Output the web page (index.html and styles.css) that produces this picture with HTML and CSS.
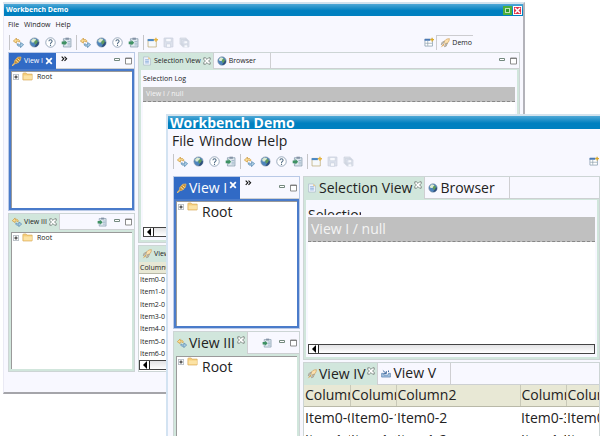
FILE: index.html
```html
<!DOCTYPE html>
<html lang="en">
<head>
<meta charset="utf-8">
<title>Workbench Demo</title>
<link rel="stylesheet" href="styles.css">
</head>
<body>
<svg class="sprite" aria-hidden="true">
  <symbol id="i-nav" viewBox="0 0 16 16">
    <path d="M.5 6 5 1.500v2.500c3-1 5 0 5 3H8C8 6 7 6 5 6.500V9z" fill="#fbdc94" stroke="#c99537"/>
    <path d="M15.500 11 11 15.500V13c-3 1-5 0-5-3h2c0 1 1 1.500 3 1V8z" fill="#a9cbe4" stroke="#5285ac"/>
  </symbol>
  <symbol id="i-globe" viewBox="0 0 16 16">
    <circle cx="8" cy="8" r="6.700" fill="#4d84bd" stroke="#8393a3"/>
    <path d="M8 14.500A6.500 6.500 0 0 0 14.500 8L12 6l-2 5z" fill="#2f4f7c"/>
    <path d="M3 5l3-3 4 1 0 2-3 3-3 0z" fill="#dcebd0"/>
    <path d="M8 6l3-2 2 3-3 4-2-1z" fill="#5f9a5c"/>
  </symbol>
  <symbol id="i-help" viewBox="0 0 16 16">
    <circle cx="8" cy="8" r="6.900" fill="#fff" stroke="#7389a0"/>
    <path d="M5.700 6.200c0-3 4.600-3 4.600 0 0 1.800-2.300 1.800-2.300 4" fill="none" stroke="#4a6681" stroke-width="1.500"/>
    <path d="M7.200 11.200h1.600v1.800H7.200z" fill="#4a6681"/>
  </symbol>
  <symbol id="i-import" viewBox="0 0 16 16">
    <path d="M3.500 2.500h11v12h-11z" fill="#dfe8ee" stroke="#7c92a5"/>
    <path d="M6.500 1h5v3h-5z" fill="#8593a6"/>
    <path d="M9.500 6.500h4M9.500 9h4M9.500 11.500h4" stroke="#8ba6bf"/>
    <path d="M1 6.500h4V4.500l4 4-4 4v-2H1z" fill="#3f9163"/>
  </symbol>
  <symbol id="i-new" viewBox="0 0 16 16">
    <path d="M1.500 3.500h12v11h-12z" fill="#f6f9fc" stroke="#b9a56c"/>
    <path d="M1 3h9v3H1z" fill="#4a88c6"/>
    <path d="M13 1v6M10 4h6" stroke="#e6b543" stroke-width="2"/>
  </symbol>
  <symbol id="i-save" viewBox="0 0 16 16">
    <path d="M1.500 1.500h13v13h-13z" fill="#dde2ed" stroke="#c9cfdc"/>
    <path d="M4 2h8v5H4zM5 10h6v5H5z" fill="#f8f9fd" stroke="#c9d0dd"/>
  </symbol>
  <symbol id="i-saveall" viewBox="0 0 16 16">
    <path d="M1.500 1.500h9v9h-9zM3.500 3.500h9v9h-9zM5.500 5.500h9v9h-9z" fill="#e1e6ef" stroke="#cad0dc"/>
    <path d="M8 6h4v3H8zM8 12h4v3H8z" fill="#f8f9fd"/>
  </symbol>
  <symbol id="i-persp" viewBox="0 0 16 16">
    <path d="M1.500 3.500h12v11h-12z" fill="#fff" stroke="#71889b"/>
    <path d="M1 3h9v3H1z" fill="#4a79b4"/>
    <path d="M2 10h11M6 6v8" stroke="#8296a4"/>
    <path d="M13 1v6M10 4h6" stroke="#dba92a" stroke-width="2"/>
  </symbol>
  <symbol id="i-rocket" viewBox="0 0 16 16">
    <path d="M15 1c-5 0-8 3-9 6l3 3c3-1 6-4 6-9z" fill="#fbe0ae" stroke="#d09a50"/>
    <path d="M7 5 3 7l-1 4 4-3zM9 9l3-1-2 5-3 1z" fill="#c9c5bd" stroke="#9c9384"/>
    <path d="M1 15l5-6 1 2z" fill="#dd9836"/>
  </symbol>
  <symbol id="i-plug" viewBox="0 0 16 16">
    <path d="M14.500 1.500 9 2 4.500 7l-1 5.500 5-1 5-5z" fill="#c98f33" stroke="#edc06a"/>
    <path d="M0 16l4-4" stroke="#edc06a" stroke-width="2"/>
    <path d="M6 6.500l4 4M9 4l3.500 3.500" stroke="#fff0b8" stroke-width="1.500"/>
  </symbol>
  <symbol id="i-doc" viewBox="0 0 16 16">
    <path d="M2.500 1.500h8l3 3v10h-11z" fill="#eef3fb" stroke="#a9b7c9"/>
    <path d="M10 1v4h4" fill="#e8c887"/>
    <path d="M5 6h6M5 8.500h6M5 11h6" stroke="#8fb0dc" stroke-width="1.500"/>
  </symbol>
  <symbol id="i-tray" viewBox="0 0 16 16">
    <path d="M1 8.500h3l1 3h6l1-3h3v6H1z" fill="#a4c2e1" stroke="#4975a5"/>
    <path d="M3 4l5 4.500M8.500 5v4h-4M12 4v2.500" fill="none" stroke="#315f96" stroke-width="1.500"/>
  </symbol>
  <symbol id="i-folder" viewBox="0 0 20 16">
    <path d="M1.500 14V3l1-1.500h5L9 3.500h9.500V14l-1 .5h-15z" fill="#f4cd7b" stroke="#d3a451"/>
    <path d="M3 6h15v7H3z" fill="#fce3a5"/>
  </symbol>
  <symbol id="i-plus" viewBox="0 0 9 9">
    <path d="M.5.5h8v8h-8z" fill="#fff" stroke="#8c97a1"/>
    <path d="M2 4.500h5M4.500 2v5" stroke="#111" stroke-width="1.300"/>
  </symbol>
  <symbol id="i-close" viewBox="0 0 10 10">
    <path d="M1 1h2l2 2 2-2h2v2L7 5l2 2v2H7L5 7 3 9H1V7l2-2-2-2z" fill="#fff" stroke="#68736d"/>
  </symbol>
  <symbol id="i-x" viewBox="0 0 10 10">
    <path d="M1.500 1.500l7 7M8.500 1.500l-7 7" stroke="#fff" stroke-width="2.200"/>
  </symbol>
  <symbol id="i-more" viewBox="0 0 10 10">
    <path d="M1 1l3 3-3 3M5 1l3 3-3 3" fill="none" stroke="#111" stroke-width="1.600"/>
  </symbol>
  <symbol id="i-min" viewBox="0 0 8 8">
    <path d="M1.500 1.500h5v2h-5z" fill="#fff" stroke="#74897f"/>
  </symbol>
  <symbol id="i-max" viewBox="0 0 8 8">
    <path d="M.5 1h6v6h-6z" fill="#fff" stroke="#8c8c8c"/>
    <path d="M0 1.500h7" stroke="#808080"/>
  </symbol>
  <symbol id="i-left" viewBox="0 0 8 8">
    <path d="M6 0v8L2 4z" fill="#000"/>
  </symbol>
</svg>

<main class="desktop">
  <section class="window back">
    <header class="titlebar">
      <h1>Workbench Demo</h1>
      <button class="caption zoom" aria-label="Maximize"></button>
      <button class="caption quit" aria-label="Close"><svg><use href="#i-x"/></svg></button>
    </header>
    <nav class="menu"><button>File</button><button>Window</button><button>Help</button></nav>
    <div class="toolbar">
      <div class="group">
        <button aria-label="Navigate"><svg><use href="#i-nav"/></svg></button><button aria-label="Web"><svg><use href="#i-globe"/></svg></button><button aria-label="Help contents"><svg><use href="#i-help"/></svg></button><button aria-label="Import"><svg><use href="#i-import"/></svg></button>
      </div>
      <div class="group">
        <button aria-label="Navigate"><svg><use href="#i-nav"/></svg></button><button aria-label="Web"><svg><use href="#i-globe"/></svg></button><button aria-label="Help contents"><svg><use href="#i-help"/></svg></button><button aria-label="Import"><svg><use href="#i-import"/></svg></button>
      </div>
      <div class="group">
        <button aria-label="New"><svg><use href="#i-new"/></svg></button><button aria-label="Save" disabled><svg><use href="#i-save"/></svg></button><button aria-label="Save all" disabled><svg><use href="#i-saveall"/></svg></button>
      </div>
      <div class="perspectives">
        <button aria-label="Open perspective"><svg><use href="#i-persp"/></svg></button>
        <button class="current"><svg><use href="#i-rocket"/></svg>Demo</button>
      </div>
    </div>
    <div class="panes">
      <div class="side">
        <section class="panel active">
          <div class="tabs">
            <div class="tab on"><svg class="icon"><use href="#i-plug"/></svg><button class="name">View I</button><button class="close" aria-label="Close view"><svg><use href="#i-x"/></svg></button></div>
            <button class="more" aria-label="More views"><svg><use href="#i-more"/></svg></button>
            <div class="tools"><button aria-label="Minimize"><svg><use href="#i-min"/></svg></button><button aria-label="Maximize"><svg><use href="#i-max"/></svg></button></div>
          </div>
          <ul class="tree"><li><svg class="plus"><use href="#i-plus"/></svg><svg class="folder"><use href="#i-folder"/></svg><span>Root</span></li></ul>
        </section>
        <section class="panel">
          <div class="tabs">
            <div class="tab on"><svg class="icon"><use href="#i-nav"/></svg><button class="name">View III</button><button class="close" aria-label="Close view"><svg><use href="#i-close"/></svg></button></div>
            <div class="tools"><button class="wide" aria-label="Import"><svg><use href="#i-import"/></svg></button><button aria-label="Minimize"><svg><use href="#i-min"/></svg></button><button aria-label="Maximize"><svg><use href="#i-max"/></svg></button></div>
          </div>
          <ul class="tree"><li><svg class="plus"><use href="#i-plus"/></svg><svg class="folder"><use href="#i-folder"/></svg><span>Root</span></li></ul>
        </section>
      </div>
      <div class="content">
        <section class="panel">
          <div class="tabs">
            <div class="tab on"><svg class="icon"><use href="#i-doc"/></svg><button class="name">Selection View</button><button class="close" aria-label="Close view"><svg><use href="#i-close"/></svg></button></div>
            <div class="tab"><svg class="icon"><use href="#i-globe"/></svg><button class="name">Browser</button></div>
            <div class="tools"><button aria-label="Minimize"><svg><use href="#i-min"/></svg></button><button aria-label="Maximize"><svg><use href="#i-max"/></svg></button></div>
          </div>
          <div class="log">
            <h2>Selection Log</h2>
            <ul><li>View I / null</li></ul>
            <div class="scroll"><button aria-label="Scroll left"><svg><use href="#i-left"/></svg></button></div>
          </div>
        </section>
        <section class="panel">
          <div class="tabs">
            <div class="tab on"><svg class="icon"><use href="#i-rocket"/></svg><button class="name">View IV</button></div>
          </div>
          <div class="grid">
            <table>
              <thead><tr><th>Column0</th></tr></thead>
              <tbody>
                <tr><td>Item0-0</td></tr><tr><td>Item1-0</td></tr><tr><td>Item2-0</td></tr><tr><td>Item3-0</td></tr><tr><td>Item4-0</td></tr><tr><td>Item5-0</td></tr><tr><td>Item6-0</td></tr>
              </tbody>
            </table>
            <div class="scroll"><button aria-label="Scroll left"><svg><use href="#i-left"/></svg></button></div>
          </div>
        </section>
      </div>
    </div>
  </section>

  <section class="window front">
    <header class="titlebar"><h1>Workbench Demo</h1></header>
    <nav class="menu"><button>File</button><button>Window</button><button>Help</button></nav>
    <div class="toolbar">
      <div class="group">
        <button aria-label="Navigate"><svg><use href="#i-nav"/></svg></button><button aria-label="Web"><svg><use href="#i-globe"/></svg></button><button aria-label="Help contents"><svg><use href="#i-help"/></svg></button><button aria-label="Import"><svg><use href="#i-import"/></svg></button>
      </div>
      <div class="group">
        <button aria-label="Navigate"><svg><use href="#i-nav"/></svg></button><button aria-label="Web"><svg><use href="#i-globe"/></svg></button><button aria-label="Help contents"><svg><use href="#i-help"/></svg></button><button aria-label="Import"><svg><use href="#i-import"/></svg></button>
      </div>
      <div class="group">
        <button aria-label="New"><svg><use href="#i-new"/></svg></button><button aria-label="Save" disabled><svg><use href="#i-save"/></svg></button><button aria-label="Save all" disabled><svg><use href="#i-saveall"/></svg></button>
      </div>
      <div class="perspectives">
        <button aria-label="Open perspective"><svg><use href="#i-persp"/></svg></button>
      </div>
    </div>
    <div class="panes">
      <div class="side">
        <section class="panel active">
          <div class="tabs">
            <div class="tab on"><svg class="icon"><use href="#i-plug"/></svg><button class="name">View I</button><button class="close" aria-label="Close view"><svg><use href="#i-x"/></svg></button></div>
            <button class="more" aria-label="More views"><svg><use href="#i-more"/></svg></button>
            <div class="tools"><button aria-label="Minimize"><svg><use href="#i-min"/></svg></button><button aria-label="Maximize"><svg><use href="#i-max"/></svg></button></div>
          </div>
          <ul class="tree"><li><svg class="plus"><use href="#i-plus"/></svg><svg class="folder"><use href="#i-folder"/></svg><span>Root</span></li></ul>
        </section>
        <section class="panel">
          <div class="tabs">
            <div class="tab on"><svg class="icon"><use href="#i-nav"/></svg><button class="name">View III</button><button class="close" aria-label="Close view"><svg><use href="#i-close"/></svg></button></div>
            <div class="tools"><button class="wide" aria-label="Import"><svg><use href="#i-import"/></svg></button><button aria-label="Minimize"><svg><use href="#i-min"/></svg></button><button aria-label="Maximize"><svg><use href="#i-max"/></svg></button></div>
          </div>
          <ul class="tree"><li><svg class="plus"><use href="#i-plus"/></svg><svg class="folder"><use href="#i-folder"/></svg><span>Root</span></li></ul>
        </section>
      </div>
      <div class="content">
        <section class="panel">
          <div class="tabs">
            <div class="tab on"><svg class="icon"><use href="#i-doc"/></svg><button class="name">Selection View</button><button class="close" aria-label="Close view"><svg><use href="#i-close"/></svg></button></div>
            <div class="tab"><svg class="icon"><use href="#i-globe"/></svg><button class="name">Browser</button></div>
          </div>
          <div class="log">
            <h2>Selection Log</h2>
            <ul><li>View I / null</li></ul>
            <div class="scroll"><button aria-label="Scroll left"><svg><use href="#i-left"/></svg></button></div>
          </div>
        </section>
        <section class="panel">
          <div class="tabs">
            <div class="tab on"><svg class="icon"><use href="#i-rocket"/></svg><button class="name">View IV</button><button class="close" aria-label="Close view"><svg><use href="#i-close"/></svg></button></div>
            <div class="tab"><svg class="icon"><use href="#i-tray"/></svg><button class="name">View V</button></div>
          </div>
          <div class="grid">
            <table>
              <colgroup><col><col><col class="wide"><col><col></colgroup>
              <thead><tr><th>Column0</th><th>Column1</th><th>Column2</th><th>Column3</th><th>Column4</th></tr></thead>
              <tbody>
                <tr><td>Item0-0</td><td>Item0-1</td><td>Item0-2</td><td>Item0-3</td><td>Item0-4</td></tr>
                <tr><td>Item1-0</td><td>Item1-1</td><td>Item1-2</td><td>Item1-3</td><td>Item1-4</td></tr>
              </tbody>
            </table>
          </div>
        </section>
      </div>
    </div>
  </section>
</main>
</body>
</html>
```
FILE: styles.css
```css
* { box-sizing: border-box; margin: 0; padding: 0; }
body { background: #fff; font-family: "Open Sans", "Noto Sans", sans-serif; color: #222; }
button { border: 0; background: none; color: inherit; font: inherit; white-space: nowrap; display: flex; align-items: center; justify-content: center; }
svg { display: block; flex: none; }
ul { list-style: none; }
.sprite { position: absolute; width: 0; height: 0; }

.desktop { position: relative; height: 100vh; overflow: hidden; }

.window {
  position: absolute;
  display: flex;
  flex-direction: column;
  height: 392px;
  background: #f8f8ff;
  border-top: 2px solid #d3e3ee;
  font-size: var(--text);
  line-height: var(--line);
}
.back {
  --text: 7px; --line: 10px; --title: 12px; --menu: 18px; --tab: 16px; --close: 8px; --icon: 10px; --row: 12px;
  left: 3px; right: 75px; top: 2px;
  border-left: 1px solid #eaeaf4;
  border-right: 2px solid #b3b3ba;
  border-bottom: 2px solid #a5a5aa;
}
.front {
  --text: 14px; --line: 20px; --title: 13px; --menu: 23px; --tab: 22px; --close: 8px; --icon: 10px; --row: 22px;
  left: 166px; right: 0; top: 114px;
  border-left: 2px solid #d3e3f2;
}

.titlebar { display: flex; align-items: center; gap: 1px; height: var(--title); padding: 0 1px 0 2px; background: linear-gradient(#4fa8d6, #0080c0 55%); overflow: hidden; }
.titlebar h1 { flex: 1; color: #fff; font-size: var(--text); font-weight: 700; }
.caption { width: 9px; height: 9px; border: 1px solid #fff; }
.caption svg { width: 7px; height: 7px; }
.zoom { border: 2px solid #4caf3c; outline: 1px solid #bfe3b6; outline-offset: -3px; background: #2f9927; }
.quit { background: #e0304a; }

.menu { display: flex; align-items: center; gap: 5px; height: var(--menu); padding-left: 4px; }

.toolbar { display: flex; align-items: center; height: 16px; padding: 0 50px 0 5px; }
.group { display: flex; border-left: 1px solid #c5c5c8; padding-right: 2px; }
.group button { width: 16px; height: 15px; }
.group svg { width: 11px; height: 11px; }
.perspectives { display: flex; margin-left: auto; gap: 2px; }
.perspectives svg { width: 10px; height: 10px; }
.current { gap: 2px; height: 15px; padding: 0 1px 0 3px; border-top: 1px solid #ccccd0; border-left: 1px solid #ccccd0; }
.front .toolbar { padding-right: 1px; height: 18px; margin-bottom: 6px; }

.panes { flex: 1; display: grid; grid-template-columns: 127px minmax(0, 1fr); gap: 3px; min-height: 0; padding: 2px 3px 20px 4px; }
.front .panes { padding: 0 0 22px 5px; }
.side, .content { display: grid; gap: 2px; min-height: 0; min-width: 0; }
.side { grid-template-rows: minmax(0, 1fr) minmax(0, 1fr); }
.content { grid-template-rows: minmax(0, 3fr) minmax(0, 2fr); }

.panel { display: flex; flex-direction: column; min-width: 0; min-height: 0; border: 1px solid #cdd5d5; overflow: hidden; }
.tabs { flex: none; display: flex; height: var(--tab); border-bottom: 1px solid #cdd0d2; }
.tab { display: flex; align-items: center; gap: 2px; padding: 0 3px; border-right: 1px solid #cfcfd2; }
.tab:not(.on) { padding-right: 14px; }
.tab.on { background: #d1e6dc; margin-bottom: -1px; padding-right: 2px; }
.active .tab.on { background: #316ac5; color: #fff; border-color: #316ac5; }
.icon { width: var(--icon); height: var(--icon); }
.close svg { width: var(--close); height: var(--close); }
.front .close { align-self: flex-start; padding-top: 4px; }
.more { align-self: flex-start; padding: 3px 0 0 5px; }
.more svg { width: 7px; height: 7px; }
.tools { display: flex; align-items: center; gap: 4px; margin-left: auto; padding-right: 1px; }
.tools svg { width: 8px; height: 8px; }
.tools .wide { margin-right: 2px; }
.tools .wide svg { width: 10px; height: 10px; }

.tree { flex: 1; background: #fff; border: 2px solid #d1e6dc; box-shadow: inset 1px 1px #9a9a9a; padding: 1px 2px; }
.active { border-color: #b9c9e6; }
.active .tree { border-color: #4a7bca; }
.tree li { display: flex; align-items: flex-start; gap: 3px; }
.plus { width: 6px; height: 6px; margin-top: 2px; }
.folder { width: 11px; height: 9px; }
.tree span { padding-left: 1px; }

.log { flex: 1; display: flex; flex-direction: column; min-height: 0; border: 2px solid #d1e6dc; border-top-width: 1px; padding: 0 2px 0 2px; }
.log h2 { font-size: var(--text); font-weight: 400; padding: 4px 0 3px; }
.log ul { flex: 1; background: #fff; }
.log li { display: flex; align-items: center; height: 15px; padding-left: 3px; background: #c0c0c0; color: #f4f4f4; border-bottom: 1px dashed #888; }
.front .log h2 { width: 53px; height: 15px; margin-bottom: 2px; padding: 5px 0 0; overflow: hidden; white-space: nowrap; }
.front .log li { height: 25px; }
.scroll { flex: none; height: 10px; margin-bottom: 3px; background: linear-gradient(#e2e2e4, #fff); border: 1px solid #444; }
.scroll button { width: 10px; height: 8px; background: #fff; border-right: 1px solid #222; }
.scroll svg { width: 8px; height: 8px; }

.grid { flex: 1; display: flex; flex-direction: column; min-height: 0; background: #fff; overflow: hidden; }
table { border-collapse: collapse; table-layout: fixed; width: 100%; }
th, td { height: var(--row); padding: 0 0 0 1px; text-align: left; font-weight: 400; white-space: nowrap; overflow: hidden; }
th { background: #e8e8d5; border-right: 1px solid #c9c9b8; border-bottom: 1px solid #b9b9a8; }
.back table { flex: 1; }
.back .grid .scroll { margin: 0 0 1px; }
.front table { width: 307px; }
col { width: 46px; }
col.wide { width: 124px; }
```
